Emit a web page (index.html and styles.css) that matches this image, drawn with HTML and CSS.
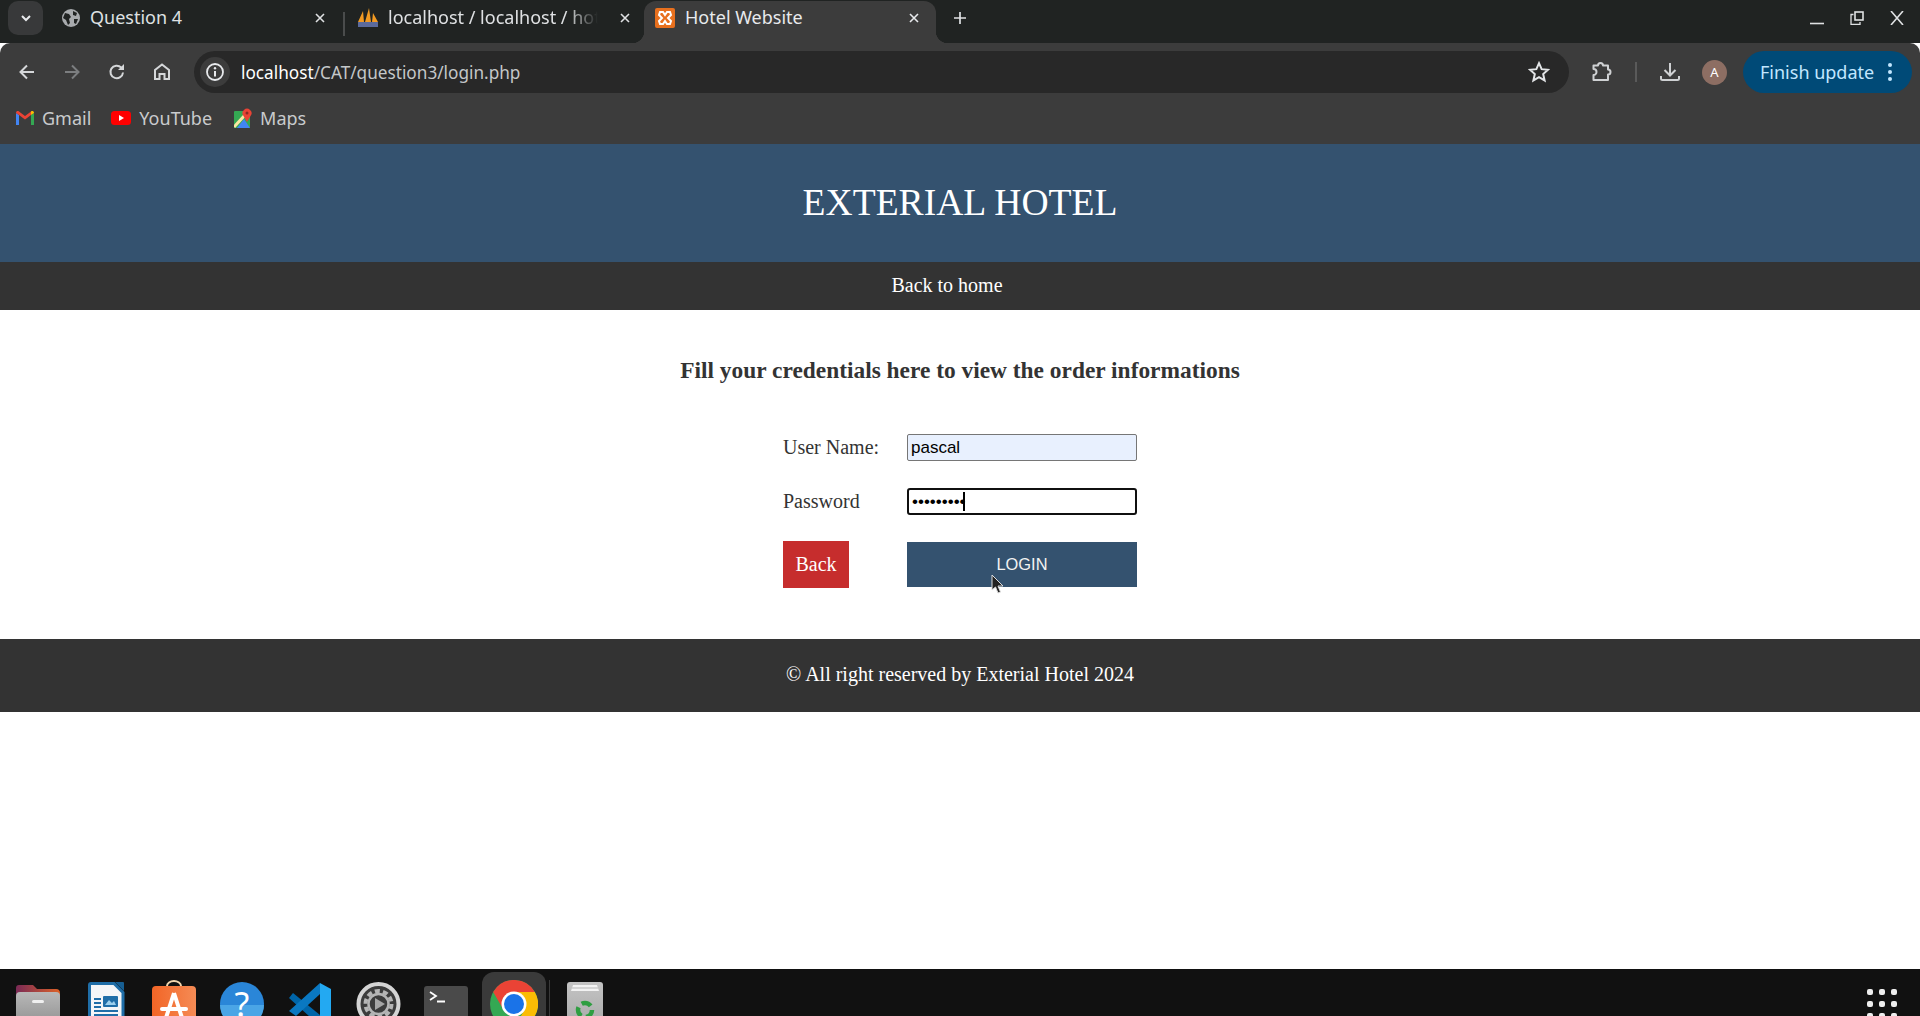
FILE: index.html
```html
<!DOCTYPE html>
<html lang="en">
<head>
    <meta charset="UTF-8">
    <meta name="viewport" content="width=device-width, initial-scale=1.0">
    <title>Hotel Website</title>
    <link rel="stylesheet" href="styles.css">
</head>
<body>
    <!-- Browser chrome -->
    <div class="tabstrip">
        <div class="tab-search">
            <svg width="14" height="14" viewBox="0 0 14 14"><path d="M3 5l4 4 4-4" fill="none" stroke="#e8eaed" stroke-width="2"/></svg>
        </div>
        <div class="tab tab-first">
            <svg class="favicon" viewBox="0 0 20 20"><circle cx="10" cy="10" r="9" fill="#a8abae"/><path d="M4 5l4 1 2 3-2 2 1 4-2 2-2-5-3-2zM12 3l4 2-1 3-3-1zM13 11l4 0-2 5-2-1z" fill="#202322"/></svg>
            <span class="tab-title">Question 4</span>
            <svg class="tab-close" viewBox="0 0 12 12"><path d="M2 2l8 8M10 2l-8 8" stroke="#dfe1e3" stroke-width="1.6"/></svg>
        </div>
        <div class="tab-sep"></div>
        <div class="tab tab-second">
            <svg class="favicon" viewBox="0 0 20 20"><path d="M0 14L5 3l1 11zM7 14L11 0l2 14zM14 14l1-9 5 9z" fill="#f29a22"/><rect x="0" y="14" width="20" height="5" fill="#5b6a9c"/></svg>
            <span class="tab-title tab-fade">localhost / localhost / hotel</span>
            <svg class="tab-close" viewBox="0 0 12 12"><path d="M2 2l8 8M10 2l-8 8" stroke="#dfe1e3" stroke-width="1.6"/></svg>
        </div>
        <div class="tab tab-active">
            <svg class="favicon" viewBox="0 0 20 20"><rect width="20" height="20" rx="2" fill="#e8701e"/><path d="M5 4h3l2 3 2-3h3l1 3-3 3 3 3-1 3h-3l-2-3-2 3H5l-1-3 3-3-3-3z" fill="none" stroke="#fff" stroke-width="2"/></svg>
            <span class="tab-title">Hotel Website</span>
            <svg class="tab-close" viewBox="0 0 12 12"><path d="M2 2l8 8M10 2l-8 8" stroke="#e8eaed" stroke-width="1.6"/></svg>
        </div>
        <svg class="tab-new" viewBox="0 0 14 14"><path d="M7 1v12M1 7h12" stroke="#dfe1e3" stroke-width="1.7"/></svg>
        <div class="window-btns">
            <svg viewBox="0 0 14 14"><path d="M0 12.5h14" stroke="#dfe1e3" stroke-width="1.6"/></svg>
            <svg viewBox="0 0 14 14"><path d="M3.5 3.5H1v10h9V11" fill="none" stroke="#dfe1e3" stroke-width="1.3"/><rect x="5" y="1" width="8" height="8" fill="none" stroke="#dfe1e3" stroke-width="1.6"/></svg>
            <svg viewBox="0 0 14 14"><path d="M1 0l12 14M13 0L1 14" stroke="#dfe1e3" stroke-width="1.6"/></svg>
        </div>
    </div>

    <div class="toolbar">
        <div class="toolbar-row">
            <svg class="nav-icon" viewBox="0 0 20 20"><path d="M17 10H4M10 3.5L3.5 10l6.5 6.5" fill="none" stroke="#d5d7d9" stroke-width="2"/></svg>
            <svg class="nav-icon" viewBox="0 0 20 20"><path d="M3 10h13M10 3.5l6.5 6.5-6.5 6.5" fill="none" stroke="#7c7e80" stroke-width="2"/></svg>
            <svg class="nav-icon" viewBox="0 0 20 20"><path d="M16 10.5a6.3 6.3 0 1 1-1.8-5L16 7" fill="none" stroke="#d5d7d9" stroke-width="2"/><path d="M17 2v6h-6z" fill="#d5d7d9"/></svg>
            <svg class="nav-icon" viewBox="0 0 20 20"><path d="M3 17V8l7-5.5L17 8v9h-4.5v-5h-5v5z" fill="none" stroke="#d5d7d9" stroke-width="2"/></svg>
            <div class="omnibox">
                <div class="site-info">
                    <svg width="20" height="20" viewBox="0 0 20 20"><circle cx="10" cy="10" r="8" fill="none" stroke="#e8eaed" stroke-width="1.8"/><path d="M10 9v5.5" stroke="#e8eaed" stroke-width="2"/><circle cx="10" cy="6.3" r="1.2" fill="#e8eaed"/></svg>
                </div>
                <span class="url">localhost<span class="url-path">/CAT/question3/login.php</span></span>
                <svg class="star" viewBox="0 0 20 20"><path d="M10 2l2.4 5.4 5.8.6-4.4 3.900 1.300 5.800L10 14.700l-5.100 3 1.300-5.800L1.800 8l5.800-.6z" fill="none" stroke="#e3e5e7" stroke-width="1.8"/></svg>
            </div>
            <svg class="ext-icon" viewBox="0 0 22 22"><path d="M2.500 4.500H7A2.500 2.500 0 0 1 12 4.500H17V8.500A2.500 2.500 0 0 1 17 13.500V19H2.500V14A3 3 0 0 0 2.500 8Z" fill="none" stroke="#cfd1d3" stroke-width="2" stroke-linejoin="round"/></svg>
            <div class="toolbar-sep"></div>
            <svg class="dl-icon" viewBox="0 0 22 22"><path d="M11 2v12M5.500 9l5.500 5.500L16.500 9" fill="none" stroke="#cfd1d3" stroke-width="2"/><path d="M2 15v2.500A1.500 1.500 0 0 0 3.500 19h15a1.500 1.500 0 0 0 1.500-1.500V15" fill="none" stroke="#cfd1d3" stroke-width="2"/></svg>
            <div class="avatar">A</div>
            <div class="update-pill">
                <span>Finish update</span>
                <svg width="6" height="20" viewBox="0 0 6 20"><circle cx="3" cy="3" r="2" fill="#c2e7ff"/><circle cx="3" cy="10" r="2" fill="#c2e7ff"/><circle cx="3" cy="17" r="2" fill="#c2e7ff"/></svg>
            </div>
        </div>
        <div class="bookmarks">
            <div class="bookmark">
                <svg class="bm-gmail" viewBox="0 0 18 14"><path d="M0 14V2l3 2v10z" fill="#4285f4"/><path d="M15 14V4l3-2v12z" fill="#34a853"/><path d="M0 2c0-2 2-2.500 3-1.500L9 5l6-4.500 0 3.500-6 4.500L3 4z" fill="#ea4335"/><path d="M15 .5c1-1 3-.5 3 1.500l-3 2z" fill="#fbbc04"/></svg>
                <span>Gmail</span>
            </div>
            <div class="bookmark">
                <svg class="bm-yt" viewBox="0 0 20 14"><rect width="20" height="14" rx="3.500" fill="#f00"/><path d="M8 4l5 3-5 3z" fill="#fff"/></svg>
                <span>YouTube</span>
            </div>
            <div class="bookmark">
                <svg class="bm-maps" viewBox="0 0 18 20"><rect x="0" y="3" width="16" height="17" rx="1" fill="#34a853"/><path d="M3 20l7-9 6 9z" fill="#4285f4"/><path d="M0 19L11 7" stroke="#fbe7a2" stroke-width="3"/><path d="M13 14L9.500 8a4.500 4.500 0 1 1 7 0z" fill="#ea4335"/><circle cx="13" cy="5" r="1.500" fill="#8c2a22"/></svg>
                <span>Maps</span>
            </div>
        </div>
    </div>

    <!-- Page -->
    <div class="page">
        <header class="site-header">
            <h1>EXTERIAL HOTEL</h1>
        </header>
        <nav class="site-nav"><a href="#">Back to home</a></nav>
        <main class="login">
            <h2>Fill your credentials here to view the order informations</h2>
            <form class="login-form">
                <label for="username">User Name:</label>
                <input class="field field-filled" type="text" id="username" value="pascal">
                <label for="password">Password</label>
                <div class="pw-wrap">
                    <input class="field field-focus" type="password" id="password" value="password1">
                    <span class="caret"></span>
                </div>
                <a class="btn-back" href="#">Back</a>
                <div class="login-wrap">
                    <button class="btn-login" type="button">LOGIN</button>
                    <svg class="cursor" width="14" height="20" viewBox="0 0 14 20"><path d="M1 1v15l3.500-3 2.500 6 2.500-1-2.500-6H12z" fill="#222" stroke="#ddd" stroke-width="1"/></svg>
                </div>
            </form>
        </main>
        <footer class="site-footer">© All right reserved by Exterial Hotel 2024</footer>
    </div>

    <!-- Dock -->
    <div class="dock">
        <div class="dock-item">
            <svg viewBox="0 0 48 48">
                <defs>
                    <linearGradient id="folderBack"><stop offset="0" stop-color="#7a2a56"/><stop offset="1" stop-color="#dd6228"/></linearGradient>
                    <linearGradient id="folderFront" x2="0" y2="1"><stop offset="0" stop-color="#b8b8b8"/><stop offset="1" stop-color="#8e8e8e"/></linearGradient>
                </defs>
                <path d="M0 8a3 3 0 0 1 3-3h14l4 4h19a4 4 0 0 1 4 4v12H0z" fill="url(#folderBack)"/>
                <rect x="0" y="12" width="44" height="36" rx="4" fill="url(#folderFront)"/>
                <rect x="16" y="20" width="12" height="3" rx="1.500" fill="#f0f0f0"/>
            </svg>
        </div>
        <div class="dock-item">
            <svg viewBox="0 0 48 48">
                <path d="M7 3.500h23l9 9V48H5.500V5a1.500 1.500 0 0 1 1.500-1.500z" fill="#f4f6f8" stroke="#1f6ea8" stroke-width="3"/>
                <path d="M31 2h8a1 1 0 0 1 1 1v8z" fill="#175f93"/>
                <g fill="#1f6ea8"><rect x="10" y="18" width="7" height="2"/><rect x="10" y="22" width="7" height="2"/><rect x="10" y="26" width="7" height="2"/><rect x="10" y="30" width="24" height="2"/><rect x="10" y="34" width="24" height="2"/><rect x="19" y="16" width="15" height="11" rx="1"/></g>
                <path d="M21 25l4-5 3 3 2-2 2 4z" fill="#9cd0ee"/>
            </svg>
        </div>
        <div class="dock-item">
            <svg viewBox="0 0 48 48">
                <defs><linearGradient id="bag"><stop offset="0" stop-color="#f26526"/><stop offset="1" stop-color="#f58b55"/></linearGradient></defs>
                <path d="M15 8V6a7 5 0 0 1 14 0v2" fill="none" stroke="#f2d6ae" stroke-width="2"/>
                <rect x="0" y="6" width="44" height="42" rx="4" fill="url(#bag)"/>
                <path d="M22 13L12 44M22 13l10 31" stroke="#fff" stroke-width="4" fill="none"/>
                <rect x="8" y="27" width="28" height="4" rx="2" fill="#fff"/>
            </svg>
        </div>
        <div class="dock-item">
            <svg viewBox="0 0 48 48">
                <circle cx="22" cy="24" r="22" fill="#2a86d8"/>
                <path d="M0 25h44a22 22 0 0 1-44 0z" fill="#4aa5e6"/>
                <text x="22" y="37" text-anchor="middle" class="help-mark">?</text>
            </svg>
        </div>
        <div class="dock-item">
            <svg viewBox="0 0 48 48">
                <path d="M32 3l11 6v35l-11 6z" fill="#23a9f2"/>
                <path d="M1 18l4-5 27 22v11z" fill="#0065a9"/>
                <path d="M32 3v11L8 36l-7-5z" fill="#0a78c2"/>
            </svg>
        </div>
        <div class="dock-item">
            <svg viewBox="0 0 48 48">
                <circle cx="22.500" cy="24" r="20" fill="#3c3c3c" stroke="#d4d4d4" stroke-width="4"/>
                <circle cx="22.500" cy="24" r="13" fill="none" stroke="#b5b5b5" stroke-width="4" stroke-dasharray="5 3.170"/>
                <circle cx="22.500" cy="24" r="10" fill="#3c3c3c" stroke="#b5b5b5" stroke-width="2.500"/>
                <path d="M19 18l10 6-10 6z" fill="#a5a5a5"/>
            </svg>
        </div>
        <div class="dock-item">
            <svg viewBox="0 0 48 48">
                <rect x="0" y="6" width="44" height="42" rx="3" fill="#4a4a4a"/>
                <path d="M6 12l6 4-6 4" fill="none" stroke="#fff" stroke-width="1.800"/>
                <path d="M13 21.500h8" stroke="#fff" stroke-width="2"/>
            </svg>
        </div>
        <div class="dock-item dock-active">
            <svg viewBox="0 0 48 48">
                <circle cx="24" cy="24" r="24" fill="#34a853"/>
                <path d="M3.200 12a24 24 0 0 1 41.600 0H24a12 12 0 0 0-10.400 18z" fill="#ea4335"/>
                <path d="M44.800 12A24 24 0 0 1 24 48l10.400-18A12 12 0 0 0 24 12z" fill="#fbbc04"/>
                <circle cx="24" cy="24" r="12.500" fill="#fff"/>
                <circle cx="24" cy="24" r="10" fill="#1a73e8"/>
            </svg>
        </div>
        <div class="dock-divider"></div>
        <div class="dock-item dock-trash">
            <svg viewBox="0 0 48 48">
                <defs><linearGradient id="bin" x2="0" y2="1"><stop offset="0" stop-color="#c4c4c4"/><stop offset="1" stop-color="#a8a8a8"/></linearGradient></defs>
                <rect x="0" y="2" width="36" height="46" rx="3" fill="url(#bin)"/>
                <path d="M6 5h24l2 6H4z" fill="#f2f2f2"/>
                <path d="M5 8h26" stroke="#b5b5b5"/>
                <circle cx="18" cy="30" r="7" fill="none" stroke="#2f9e41" stroke-width="4.500" stroke-dasharray="10 4.660"/>
            </svg>
        </div>
        <div class="app-grid">
            <i></i><i></i><i></i><i></i><i></i><i></i><i></i><i></i><i></i>
        </div>
    </div>
</body>
</html>
```

FILE: styles.css
```css
* {
    box-sizing: border-box;
}
html, body {
    height: 100%;
}
body {
    margin: 0;
    display: flex;
    flex-direction: column;
    overflow: hidden;
    background: #fff;
    font-family: "Liberation Serif", serif;
}

/* tab strip */
.tabstrip {
    height: 43px;
    flex: none;
    display: flex;
    align-items: flex-end;
    background: #202322;
    color: #dfe1e3;
    font-family: "Noto Sans", sans-serif;
    font-size: 18px;
}
.tab-search {
    width: 35px;
    height: 34px;
    margin: 0 3px 8px 8px;
    border-radius: 10px;
    background: #38393a;
    display: flex;
    align-items: center;
    justify-content: center;
}
.tab {
    height: 42px;
    display: flex;
    align-items: center;
    padding-bottom: 9px;
}
.favicon {
    width: 20px;
    height: 20px;
    flex: none;
}
.tab-title {
    flex: 1;
    margin-bottom: 2px;
    white-space: nowrap;
    overflow: hidden;
}
.tab-fade {
    -webkit-mask-image: linear-gradient(to right, #000 85%, transparent 100%);
    mask-image: linear-gradient(to right, #000 85%, transparent 100%);
}
.tab-close {
    width: 12px;
    height: 12px;
    flex: none;
}
.tab-first {
    width: 294px;
    padding-left: 15px;
    padding-right: 14px;
}
.tab-first .tab-title {
    margin-left: 9px;
}
.tab-sep {
    width: 2px;
    height: 24px;
    margin: 0 3px 7px 3px;
    background: #4a4c4c;
}
.tab-second {
    width: 290px;
    padding-left: 10px;
    padding-right: 7px;
}
.tab-second .tab-title {
    margin-left: 10px;
    margin-right: 21px;
}
.tab-active {
    position: relative;
    width: 292px;
    margin-left: 6px;
    padding-left: 11px;
    padding-right: 16px;
    background: #3c3c3c;
    border-radius: 12px 12px 0 0;
    color: #e8eaed;
}
.tab-active .tab-title {
    margin-left: 10px;
}
.tab-active::before,
.tab-active::after {
    content: "";
    position: absolute;
    bottom: 0;
    width: 12px;
    height: 12px;
}
.tab-active::before {
    left: -12px;
    background: radial-gradient(circle at 0 0, transparent 12px, #3c3c3c 12.5px);
}
.tab-active::after {
    right: -12px;
    background: radial-gradient(circle at 100% 0, transparent 12px, #3c3c3c 12.5px);
}
.tab-new {
    width: 14px;
    height: 14px;
    margin: 0 0 18px 17px;
}
.window-btns {
    margin-left: auto;
    display: flex;
    gap: 26px;
    padding: 0 16px 18px 0;
}
.window-btns svg {
    width: 14px;
    height: 14px;
}

/* toolbar */
.toolbar {
    height: 101px;
    flex: none;
    background: #3c3c3c;
    border-radius: 10px 10px 0 0;
}
.toolbar-row {
    height: 58px;
    display: flex;
    align-items: center;
    padding: 0 7px 0 17px;
}
.nav-icon {
    width: 20px;
    height: 20px;
    margin-right: 25px;
    flex: none;
}
.omnibox {
    width: 1375px;
    height: 42px;
    margin-left: -3px;
    padding: 0 19px 0 0;
    flex: none;
    display: flex;
    align-items: center;
    background: #282828;
    border-radius: 21px;
}
.site-info {
    width: 30px;
    height: 30px;
    margin-left: 6px;
    border-radius: 50%;
    background: #3c3c3c;
    display: flex;
    align-items: center;
    justify-content: center;
}
.url {
    margin-left: 11px;
    font-family: "Noto Sans", sans-serif;
    font-size: 17.2px;
    color: #fff;
}
.url-path {
    color: #c4c7c9;
}
.star {
    width: 22px;
    height: 22px;
    margin-left: auto;
}
.ext-icon {
    width: 22px;
    height: 22px;
    margin-left: 22px;
}
.toolbar-sep {
    width: 2px;
    height: 20px;
    margin: 0 22px;
    background: #5a5a5a;
}
.dl-icon {
    width: 22px;
    height: 22px;
}
.avatar {
    width: 25px;
    height: 25px;
    margin-left: 21px;
    border-radius: 50%;
    background: #8d6e63;
    color: #fff;
    font: 13px "Noto Sans", sans-serif;
    display: flex;
    align-items: center;
    justify-content: center;
}
.update-pill {
    width: 169px;
    height: 42px;
    margin-left: 16px;
    padding: 0 19px 0 17px;
    border-radius: 21px;
    background: #004a77;
    color: #c2e7ff;
    font: 18px "Noto Sans", sans-serif;
    display: flex;
    align-items: center;
    justify-content: space-between;
}
.bookmarks {
    height: 34px;
    display: flex;
    align-items: center;
    padding-left: 16px;
    color: #c9cbcd;
    font: 18px "Noto Sans", sans-serif;
}
.bookmark {
    display: flex;
    align-items: center;
    gap: 8px;
    margin-right: 20px;
}
.bm-gmail {
    width: 18px;
    height: 14px;
}
.bm-yt {
    width: 20px;
    height: 14px;
}
.bm-maps {
    width: 18px;
    height: 20px;
    margin-left: 2px;
}

/* page */
.page {
    flex: 1;
    min-height: 0;
    color: #333;
}
.site-header {
    height: 118px;
    padding-bottom: 2px;
    background: #34526f;
    display: flex;
    align-items: center;
    justify-content: center;
}
.site-header h1 {
    margin: 0;
    font-size: 37.6px;
    font-weight: normal;
    color: #fff;
}
.site-nav {
    height: 48px;
    padding: 0 26px 2px 0;
    background: #333;
    display: flex;
    align-items: center;
    justify-content: center;
    font-size: 20px;
}
.site-nav a {
    color: #fff;
    text-decoration: none;
}
.login {
    height: 329px;
    padding-top: 47px;
}
.login h2 {
    margin: 0 0 50px;
    font-size: 23.4px;
    line-height: 27px;
    text-align: center;
}
.login-form {
    width: 354px;
    margin: 0 auto;
    display: grid;
    grid-template-columns: 124px 230px;
    grid-template-rows: 27px 27px 45px;
    row-gap: 27px;
    align-items: center;
    font-size: 20px;
}
.field {
    width: 230px;
    height: 27px;
    padding: 0 3px;
    border: 1px solid #767676;
    border-radius: 2px;
    background: #fff;
    font: 17px "Liberation Sans", sans-serif;
    color: #000;
    display: block;
}
.field-filled {
    background: #e8f0fe;
}
.field-focus {
    border: 2px solid #101010;
    border-radius: 3px;
    outline: none;
    padding-left: 3px;
}
.pw-wrap,
.login-wrap {
    position: relative;
}
.caret {
    position: absolute;
    left: 56px;
    top: 4px;
    width: 2px;
    height: 19px;
    background: #000;
}
.btn-back {
    width: 66px;
    height: 47px;
    background: #c62d2d;
    color: #fff;
    text-decoration: none;
    display: flex;
    align-items: center;
    justify-content: center;
}
.btn-login {
    width: 230px;
    height: 45px;
    display: block;
    border: none;
    background: #34526f;
    color: #f2f2f2;
    font: 16.4px "Liberation Sans", sans-serif;
}
.cursor {
    position: absolute;
    left: 84px;
    top: 32px;
}
.site-footer {
    height: 73px;
    padding-bottom: 2px;
    background: #333;
    color: #fff;
    font-size: 20px;
    display: flex;
    align-items: center;
    justify-content: center;
}

/* dock */
.dock {
    height: 47px;
    flex: none;
    display: flex;
    align-items: flex-start;
    padding: 3px 23px 0 4px;
    background: #111;
    overflow: hidden;
}
.dock-item {
    width: 68px;
    height: 70px;
    padding: 8px 0 0 12px;
    flex: none;
}
.dock-item svg {
    width: 48px;
    height: 48px;
    display: block;
}
.help-mark {
    font: 34px "Noto Sans", sans-serif;
    fill: #fff;
}
.dock-active {
    width: 64px;
    margin: 0 3px 0 2px;
    padding-left: 8px;
    background: #3a3a3a;
    border-radius: 12px;
}
.dock-divider {
    width: 1px;
    height: 40px;
    margin-top: 8px;
    background: #3a3a3a;
}
.dock-trash {
    padding-left: 17px;
}
.app-grid {
    margin: 17px 0 0 auto;
    display: grid;
    grid-template-columns: repeat(3, 6px);
    gap: 6px;
}
.app-grid i {
    height: 6px;
    border-radius: 2px;
    background: #eee;
}
```
